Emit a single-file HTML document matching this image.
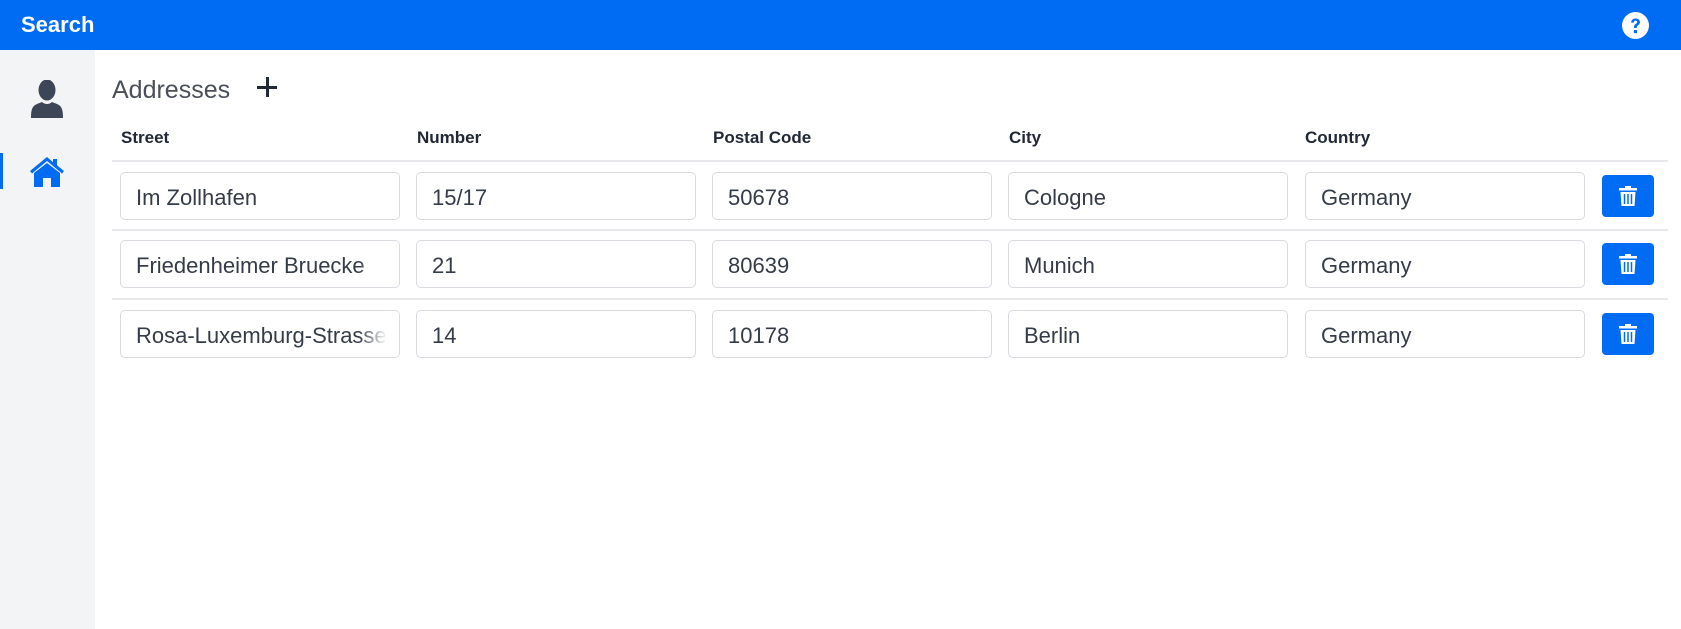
<!DOCTYPE html>
<html><head><meta charset="utf-8"><style>
*{box-sizing:border-box;margin:0;padding:0}
body{width:1681px;height:629px;overflow:hidden;background:#fff;font-family:"Liberation Sans",sans-serif;color:#212529;position:relative}
.top{position:absolute;left:0;top:0;width:1681px;height:50px;background:#006cf3}
.top .t{position:absolute;left:21px;top:12px;color:#fff;font-weight:bold;font-size:22px}
.side{position:absolute;left:0;top:50px;width:95px;height:579px;background:#f3f4f6}
.bar{position:absolute;left:0;width:3px;height:36px;background:#006cf3}
.h{position:absolute;left:112px;top:76px;font-size:25px;color:#4a4f5a}
.plus{position:absolute;left:257px;top:77px;width:20px;height:20px}
.plus:before,.plus:after{content:"";position:absolute;background:#212936}
.plus:before{left:9px;top:0;width:3px;height:20px}
.plus:after{left:0;top:9px;width:20px;height:3px}
.th{position:absolute;top:128px;font-weight:bold;font-size:17px;color:#212936}
.line{position:absolute;left:112px;width:1556px;height:2px;background:#e7e8ec}
.in{position:absolute;width:280px;height:48px;border:1px solid #d9dbe0;border-radius:5px;font-size:22px;color:#353c49;padding:12px 0 0 15px;white-space:nowrap;overflow:hidden}
.in.s{padding-right:22px}
.in.s:after{content:"";position:absolute;right:0;top:0;width:40px;height:46px;background:linear-gradient(to right,rgba(255,255,255,0),#fff 70%)}
.btn{position:absolute;left:1602px;width:52px;height:42px;background:#006cf3;border-radius:4px}
.btn svg{position:absolute;left:17px;top:11px}
</style></head><body>
<div class="top"><div class="t">Search</div>
<svg style="position:absolute;left:1622px;top:12px" width="27" height="27" viewBox="0 0 26 26"><circle cx="13" cy="13" r="13" fill="#fff"/><path d="M8.8 10.2c0-2.5 1.9-4 4.3-4s4.2 1.4 4.2 3.6c0 2.8-3.1 2.9-3.1 5v.6h-2.6v-.9c0-3 3-3.1 3-4.7 0-.9-.7-1.5-1.6-1.5-1 0-1.6.7-1.6 1.9z" fill="#006cf3"/><rect x="11.5" y="17.4" width="3" height="3" fill="#006cf3"/></svg>
</div>
<div class="side">
<svg style="position:absolute;left:31px;top:30px" width="32" height="38" viewBox="0 0 32 38"><ellipse cx="16" cy="10" rx="8.5" ry="10.5" fill="#3d4656"/><path d="M0 38c0-8 1-12 6-14 2-1 4-1.5 5-2 1.5 1.3 3 2 5 2s3.5-.7 5-2c1 .5 3 1 5 2 5 2 6 6 6 14z" fill="#3d4656"/></svg>
<div class="bar" style="top:103px"></div>
<svg style="position:absolute;left:29px;top:105px" width="36" height="32" viewBox="0 0 36 32"><path d="M18 2L1 16l2 2.5L18 6l15 12.5 2-2.5-7-5.8V4h-4v3.1z" fill="#006cf3"/><path d="M5 18L18 8l13 10v14h-9v-9h-8v9H5z" fill="#006cf3"/></svg>
</div>
<div class="h">Addresses</div><div class="plus"></div>
<div class="th" style="left:121px">Street</div>
<div class="th" style="left:417px">Number</div>
<div class="th" style="left:713px">Postal Code</div>
<div class="th" style="left:1009px">City</div>
<div class="th" style="left:1305px">Country</div>
<div class="line" style="top:160px"></div>
<div class="line" style="top:229px"></div>
<div class="line" style="top:298px"></div>

<div class="in s" style="left:120px;top:172px">Im Zollhafen</div>
<div class="in" style="left:416px;top:172px">15/17</div>
<div class="in" style="left:712px;top:172px">50678</div>
<div class="in" style="left:1008px;top:172px">Cologne</div>
<div class="in" style="left:1305px;top:172px">Germany</div>
<div class="btn" style="top:175px"><svg width="18" height="20" viewBox="0 0 18 20"><path d="M6 0h6v2h6v2.5H0V2h6z" fill="#fff"/><path d="M1.5 6h15l-1 14h-13z" fill="#fff"/><path d="M5.5 8v10M9 8v10M12.5 8v10" stroke="#006cf3" stroke-width="1.5"/></svg></div>

<div class="in s" style="left:120px;top:240px">Friedenheimer Bruecke</div>
<div class="in" style="left:416px;top:240px">21</div>
<div class="in" style="left:712px;top:240px">80639</div>
<div class="in" style="left:1008px;top:240px">Munich</div>
<div class="in" style="left:1305px;top:240px">Germany</div>
<div class="btn" style="top:243px"><svg width="18" height="20" viewBox="0 0 18 20"><path d="M6 0h6v2h6v2.5H0V2h6z" fill="#fff"/><path d="M1.5 6h15l-1 14h-13z" fill="#fff"/><path d="M5.5 8v10M9 8v10M12.5 8v10" stroke="#006cf3" stroke-width="1.5"/></svg></div>

<div class="in s" style="left:120px;top:310px">Rosa-Luxemburg-Strasse</div>
<div class="in" style="left:416px;top:310px">14</div>
<div class="in" style="left:712px;top:310px">10178</div>
<div class="in" style="left:1008px;top:310px">Berlin</div>
<div class="in" style="left:1305px;top:310px">Germany</div>
<div class="btn" style="top:313px"><svg width="18" height="20" viewBox="0 0 18 20"><path d="M6 0h6v2h6v2.5H0V2h6z" fill="#fff"/><path d="M1.5 6h15l-1 14h-13z" fill="#fff"/><path d="M5.5 8v10M9 8v10M12.5 8v10" stroke="#006cf3" stroke-width="1.5"/></svg></div>
</body></html>
